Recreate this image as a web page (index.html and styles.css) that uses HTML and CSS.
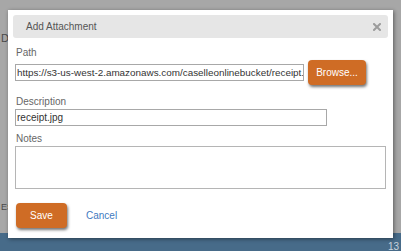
FILE: index.html
```html
<!DOCTYPE html>
<html lang="en">
<head>
    <meta charset="UTF-8">
    <meta name="viewport" content="width=device-width, initial-scale=1.0">
    <title>Add Attachment</title>
    <link rel="stylesheet" href="styles.css">
</head>
<body>
    <div class="page">
        <div class="page-main">
            <div class="bg-line first">D</div>
            <div class="bg-line second">ES</div>
        </div>
        <div class="page-footer">13</div>
    </div>

    <div class="dialog">
        <div class="dialog-header">
            <span class="dialog-title">Add Attachment</span>
            <svg class="close" width="8" height="8" viewBox="0 0 8 8">
                <path d="M1 1 L7 7 M7 1 L1 7" stroke="#9c9c9c" stroke-width="2" stroke-linecap="square"/>
            </svg>
        </div>
        <div class="dialog-body">
            <label for="path">Path</label>
            <div class="row">
                <input type="text" id="path" class="path-input" value="https://s3-us-west-2.amazonaws.com/caselleonlinebucket/receipt.jpg">
                <button class="btn browse">Browse...</button>
            </div>
            <label for="desc" class="spaced">Description</label>
            <input type="text" id="desc" class="desc-input" value="receipt.jpg">
            <label for="notes" class="notes-label">Notes</label>
            <textarea id="notes"></textarea>
            <div class="actions">
                <button class="btn save">Save</button>
                <a href="#" class="cancel">Cancel</a>
            </div>
        </div>
    </div>
</body>
</html>
```

FILE: styles.css
```css
body {
    margin: 0;
    width: 401px;
    height: 251px;
    overflow: hidden;
    background: #a7a7a7;
    font-family: "Liberation Sans", Arial, sans-serif;
    font-size: 10px;
}
.page {
    height: 251px;
    display: flex;
    flex-direction: column;
}
.page-main {
    flex: 1;
    padding-left: 1px;
    color: #4a4a4a;
    font-size: 11px;
}
.bg-line.first {
    margin-top: 32px;
}
.bg-line.second {
    margin-top: 158px;
    font-size: 9px;
}
.page-footer {
    height: 18px;
    background: #476b89;
    color: #c9d3dc;
    text-align: right;
    padding: 8px 2px 0 0;
    box-sizing: border-box;
    font-size: 10px;
}
.dialog {
    position: absolute;
    left: 8px;
    top: 10px;
    width: 385px;
    height: 228px;
    background: #fff;
    box-shadow: 1px 1px 4px rgba(0, 0, 0, 0.45);
    padding: 5px;
    box-sizing: border-box;
}
.dialog-header {
    height: 23px;
    background: #e6e6e6;
    border-radius: 3px;
    display: flex;
    align-items: center;
    justify-content: space-between;
    padding: 0 7px 0 13px;
}
.dialog-title {
    color: #555;
    font-size: 10px;
}
.dialog-body {
    padding: 9px 2px 0 2px;
    display: flex;
    flex-direction: column;
    align-items: flex-start;
}
label {
    color: #666;
    line-height: 12px;
    margin-left: 1px;
}
.row {
    display: flex;
    align-items: center;
    gap: 4px;
    margin-top: 1px;
}
input, textarea {
    box-sizing: border-box;
    border: 1px solid #a8a8a8;
    font-family: "Liberation Sans", Arial, sans-serif;
    font-size: 10px;
    color: #333;
    padding: 0 1px;
    margin: 0;
    outline: none;
}
.path-input {
    width: 289px;
    height: 17px;
    font-size: 9.9px;
    padding: 0 0 0 1px;
}
.desc-input {
    width: 312px;
    height: 17px;
    margin-top: 1px;
}
.spaced {
    margin-top: 11px;
}
.notes-label {
    margin-top: 7px;
}
textarea {
    width: 371px;
    height: 43px;
    margin-top: 1px;
    border-color: #b5b5b5;
    resize: none;
}
.btn {
    background: #cf6c25;
    color: #fff;
    border: none;
    border-radius: 4px;
    box-shadow: 1px 2px 3px rgba(0, 0, 0, 0.55);
    font-family: "Liberation Sans", Arial, sans-serif;
    font-size: 10px;
    height: 25px;
    padding: 0;
    cursor: pointer;
}
.browse {
    width: 58px;
}
.actions {
    display: flex;
    align-items: center;
    margin-top: 14px;
    margin-left: 1px;
}
.save {
    width: 51px;
}
.cancel {
    color: #3f7ac0;
    text-decoration: none;
    margin-left: 19px;
    font-size: 10px;
}
```
